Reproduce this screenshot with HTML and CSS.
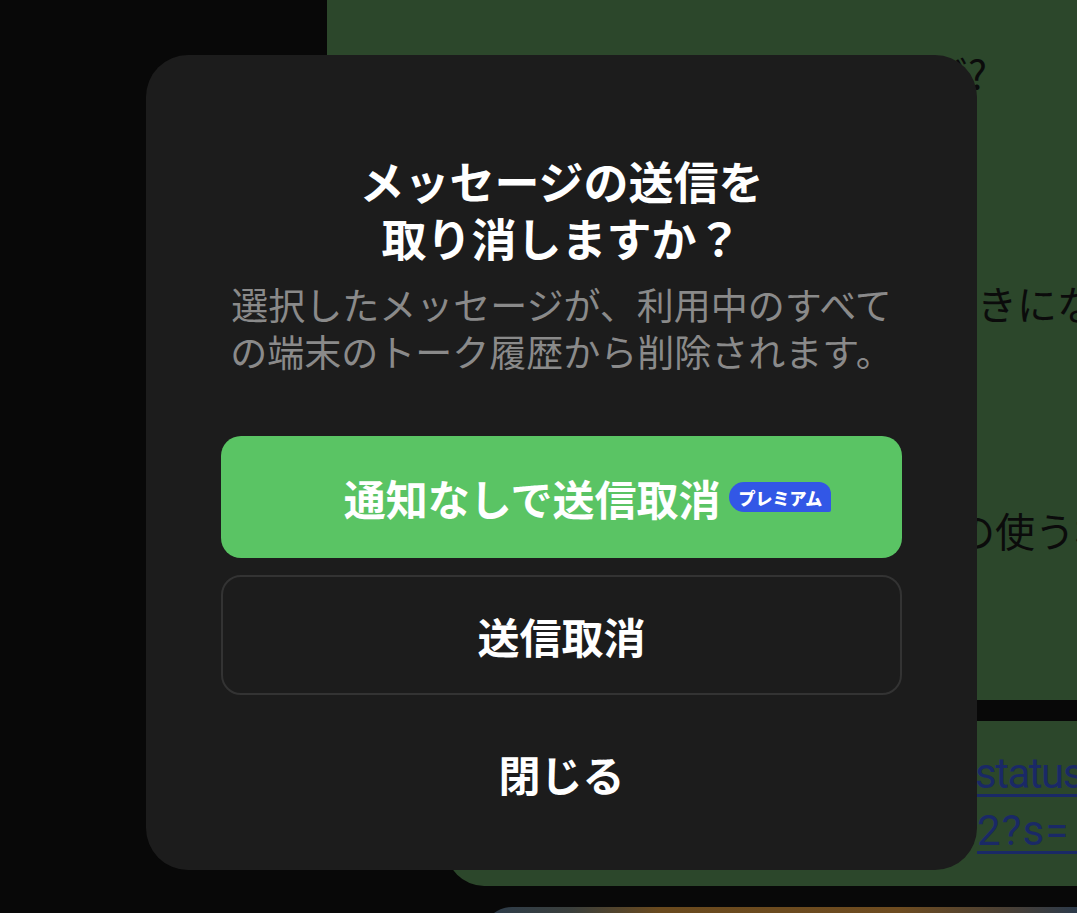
FILE: index.html
```html
<!DOCTYPE html>
<html lang="ja">
<head>
<meta charset="utf-8">
<title>送信取消</title>
<link rel="stylesheet" href="styles.css">
</head>
<body>
<div class="screen">
  <div class="chat">
    <div class="bubble bubble-main">
      <p class="line line-top">送信取消するとどうなるんだ?</p>
      <p class="line line-mid">好きになる人</p>
      <p class="line line-low">人の使う機能</p>
    </div>
    <div class="bubble bubble-link">
      <p class="link-line"><span class="link">status</span></p>
      <p class="link-line link-line-2"><span class="link">2?s=&nbsp;&nbsp;</span></p>
    </div>
    <div class="bubble bubble-media"></div>
  </div>

  <div class="dialog" role="dialog">
    <h1 class="title">メッセージの送信を<br>取り消しますか？</h1>
    <p class="desc">選択したメッセージが、利用中のすべて<br>の端末のトーク履歴から削除されます。</p>
    <div class="actions">
      <button class="btn btn-primary"><span>通知なしで送信取消</span><span class="badge">プレミアム</span></button>
      <button class="btn btn-outline">送信取消</button>
      <button class="btn btn-close">閉じる</button>
    </div>
  </div>
</div>
</body>
</html>
```

FILE: styles.css
```css
html, body {
  margin: 0;
  padding: 0;
  background: #080808;
  overflow: hidden;
}

body {
  font-family: "Noto Sans CJK JP", "Noto Sans", sans-serif;
}

.screen {
  position: relative;
  width: 1077px;
  height: 913px;
  overflow: hidden;
}

/* background chat */
.chat {
  display: flex;
  flex-direction: column;
  gap: 21px;
  margin-top: -60px;
}

.bubble {
  box-sizing: border-box;
}

.bubble-main {
  margin-left: 327px;
  height: 760px;
  background: #2c472b;
  border-radius: 0 0 0 40px;
  padding-top: 103px;
}

.line {
  margin: 0;
  font-size: 40px;
  line-height: 58px;
  color: #0b0b0b;
  white-space: nowrap;
}

.line-top {
  width: 660px;
  text-align: right;
}

.line-mid {
  margin-top: 173px;
  padding-left: 610px;
}

.line-low {
  margin-top: 169px;
  padding-left: 588px;
}

.bubble-link {
  margin-left: 446px;
  height: 165px;
  background: #2c472b;
  border-radius: 0 0 0 38px;
  padding: 24px 0 0 529px;
}

.link-line {
  margin: 0;
  font-family: "Roboto", "Liberation Sans", sans-serif;
  font-size: 42px;
  letter-spacing: -1.5px;
  line-height: 57px;
  white-space: nowrap;
}

.link-line-2 {
  padding-left: 2px;
  letter-spacing: 1px;
}

.link {
  color: #1a2966;
  text-decoration: underline;
  text-decoration-thickness: 3px;
  text-underline-offset: 6px;
}

.bubble-media {
  margin-left: 482px;
  height: 60px;
  border-radius: 30px 0 0 0;
  background: linear-gradient(90deg, #2c3c4c 0%, #3a3f3c 15%, #6a4a1e 30%, #6e4c20 70%, #4a4035 88%, #2c3a4a 100%);
}

/* dialog */
.dialog {
  position: absolute;
  left: 146px;
  top: 55px;
  width: 831px;
  height: 815px;
  box-sizing: border-box;
  background: #1c1c1c;
  border-radius: 42px;
  padding: 97px 75px 0;
  display: flex;
  flex-direction: column;
  text-align: center;
  color: #ffffff;
}

.title {
  margin: 0;
  font-size: 45px;
  font-weight: 700;
  line-height: 57px;
}

.desc {
  margin: 15px 0 0;
  font-size: 37px;
  line-height: 47px;
  color: #8a8a8a;
}

.actions {
  margin-top: 61px;
  display: flex;
  flex-direction: column;
  gap: 17px;
}

.btn {
  box-sizing: border-box;
  height: 122px;
  margin: 0;
  padding: 0;
  border: none;
  border-radius: 20px;
  background: transparent;
  display: flex;
  align-items: center;
  justify-content: center;
  font-family: "Noto Sans CJK JP", sans-serif;
  font-size: 42px;
  font-weight: 700;
  color: #ffffff;
}

.btn-primary {
  background: #5ac464;
  padding-left: 52px;
  gap: 9px;
}

.btn-outline {
  height: 120px;
  border: 2px solid #333333;
}

.btn-close {
  height: 122px;
}

.badge {
  display: inline-flex;
  align-items: center;
  height: 30px;
  padding: 0 9px 0 9px;
  border-radius: 15px 12px 2px 15px;
  background: #3257e6;
  color: #ffffff;
  font-size: 17px;
  font-weight: 900;
  line-height: 1;
}
```
